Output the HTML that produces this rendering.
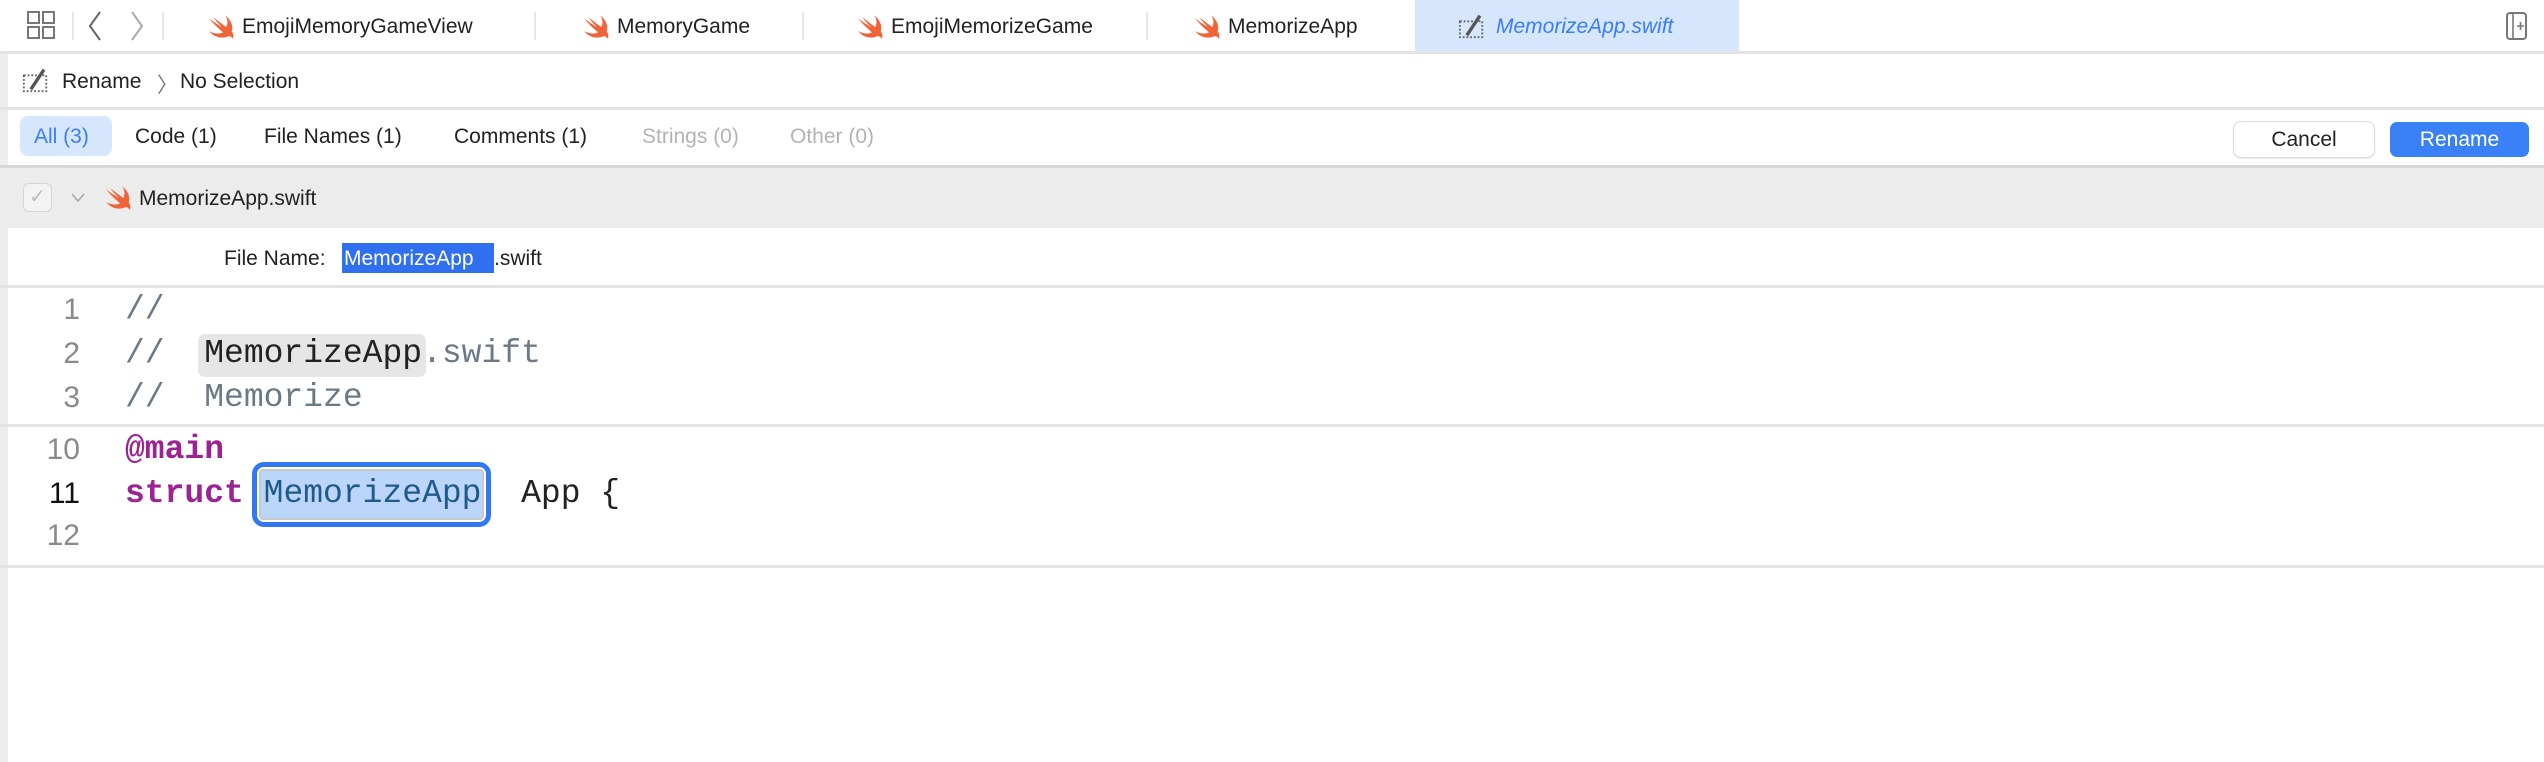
<!DOCTYPE html>
<html><head><meta charset="utf-8"><style>
*{margin:0;padding:0;box-sizing:border-box}
body{width:2544px;height:762px;background:#fff;font-family:"Liberation Sans",sans-serif;position:relative;overflow:hidden;color:#222}
.a{position:absolute;white-space:pre}
.hl{position:absolute;left:0;right:0;height:3px;background:#e3e3e3}
.t{font-size:21px;top:15px}
.mono{font-family:"Liberation Mono",monospace;font-size:33px}
.ln{position:absolute;width:80px;text-align:right;left:0;font-family:"Liberation Sans",sans-serif;font-size:30px;color:#8a8a8a}
.sep{position:absolute;top:12px;width:2px;height:28px;background:#e6e6e6}
</style></head><body>
<svg width="0" height="0" style="position:absolute"><defs>
<symbol id="sw" viewBox="0 0 28 24"><path d="M17 1c5 4 8 10 6 15 2 3 2 5 1 7-1-2-3-3-5-2-5 2-12 1-17-5 4 2 9 3 13 1C10 13 5 8 2 4c4 3 8 6 12 8C11 9 8 6 6 3c4 3 9 7 12 9 2-4 1-8-1-11z" fill="#f0643a"/></symbol>
<symbol id="rn" viewBox="0 0 30 30"><rect x="2" y="10" width="24" height="17" fill="none" stroke="#666" stroke-width="2" stroke-dasharray="2 2"/><path d="M8 24L22 3l3 2L11 26z" fill="#555"/></symbol>
</defs></svg>
<div class="a" style="left:0;top:52px;width:8px;height:710px;background:#eceeec"></div>
<svg class="a" style="left:26px;top:10px" width="30" height="30" viewBox="0 0 30 30"><g fill="none" stroke="#777" stroke-width="2"><rect x="2" y="2" width="11" height="11"/><rect x="17" y="2" width="11" height="11"/><rect x="2" y="17" width="11" height="11"/><rect x="17" y="17" width="11" height="11"/></g></svg>
<div class="sep" style="left:72px"></div>
<svg class="a" style="left:86px;top:10px" width="60" height="32" viewBox="0 0 60 32"><path d="M14 2L4 16l10 14" fill="none" stroke="#666" stroke-width="2"/><path d="M46 2l10 14-10 14" fill="none" stroke="#aaa" stroke-width="2"/></svg>
<div class="sep" style="left:162px"></div>
<svg class="a" style="left:207px;top:14px" width="30" height="26"><use href="#sw"/></svg><div class="a t" style="left:242px">EmojiMemoryGameView</div>
<div class="sep" style="left:534px"></div>
<svg class="a" style="left:582px;top:14px" width="30" height="26"><use href="#sw"/></svg><div class="a t" style="left:617px">MemoryGame</div>
<div class="sep" style="left:802px"></div>
<svg class="a" style="left:856px;top:14px" width="30" height="26"><use href="#sw"/></svg><div class="a t" style="left:891px">EmojiMemorizeGame</div>
<div class="sep" style="left:1146px"></div>
<svg class="a" style="left:1193px;top:14px" width="30" height="26"><use href="#sw"/></svg><div class="a t" style="left:1228px">MemorizeApp</div>
<div class="a" style="left:1415px;top:0;width:324px;height:52px;background:#d6e6fd"></div>
<svg class="a" style="left:1457px;top:12px" width="30" height="28"><use href="#rn"/></svg>
<div class="a t" style="left:1496px;color:#3a7ef5;font-style:italic">MemorizeApp.swift</div>
<svg class="a" style="left:2506px;top:12px" width="22" height="28" viewBox="0 0 22 28"><rect x="1" y="1" width="19" height="26" rx="3" fill="none" stroke="#777" stroke-width="2"/><path d="M7 2v24M11 14h7M14.5 10v8" stroke="#777" stroke-width="1.6"/></svg>
<div class="hl" style="top:51px"></div>
<svg class="a" style="left:21px;top:66px" width="30" height="28"><use href="#rn"/></svg>
<div class="a" style="left:62px;top:70px;font-size:21px">Rename</div>
<div class="a" style="left:157px;top:69px;font-size:21px;color:#777">〉</div>
<div class="a" style="left:180px;top:70px;font-size:21px">No Selection</div>
<div class="hl" style="top:107px"></div>
<div class="a" style="left:20px;top:116px;width:92px;height:40px;background:#d6e6fd;border-radius:8px"></div>
<div class="a" style="left:34px;top:125px;font-size:21px;color:#3a7ef5">All (3)</div>
<div class="a" style="left:135px;top:125px;font-size:21px">Code (1)</div>
<div class="a" style="left:264px;top:125px;font-size:21px">File Names (1)</div>
<div class="a" style="left:454px;top:125px;font-size:21px">Comments (1)</div>
<div class="a" style="left:642px;top:125px;font-size:21px;color:#b3b3b3">Strings (0)</div>
<div class="a" style="left:790px;top:125px;font-size:21px;color:#b3b3b3">Other (0)</div>
<div class="a" style="left:2234px;top:122px;width:140px;height:35px;border-radius:7px;background:#fff;box-shadow:0 0 0 1px #dcdcdc,0 1px 2px rgba(0,0,0,.2);font-size:21px;text-align:center;line-height:35px">Cancel</div>
<div class="a" style="left:2390px;top:122px;width:139px;height:35px;border-radius:7px;background:#3a80f6;color:#fff;font-size:21px;text-align:center;line-height:35px">Rename</div>
<div class="hl" style="top:165px;background:#d6d6d6"></div>
<div class="a" style="left:8px;top:168px;right:0;height:60px;background:#ececec"></div>
<div class="a" style="left:23px;top:183px;width:29px;height:29px;border:1px solid #d4d4d4;border-radius:6px;background:#f3f3f3;color:#bbb;font-size:20px;text-align:center;line-height:27px">✓</div>
<svg class="a" style="left:70px;top:192px" width="16" height="12"><path d="M2 2l6 7 6-7" fill="none" stroke="#aaa" stroke-width="1.6"/></svg>
<svg class="a" style="left:104px;top:185px" width="30" height="26"><use href="#sw"/></svg>
<div class="a" style="left:139px;top:187px;font-size:21px">MemorizeApp.swift</div>
<div class="a" style="left:224px;top:247px;font-size:21px">File Name:</div>
<div class="a" style="left:342px;top:243px;width:152px;height:30px;background:#2f6ff0"></div>
<div class="a" style="left:344px;top:247px;font-size:21px;color:#fff">MemorizeApp</div>
<div class="a" style="left:494px;top:247px;font-size:21px">.swift</div>
<div class="hl" style="top:285px"></div>
<div class="ln" style="top:293px">1</div>
<div class="ln" style="top:337px">2</div>
<div class="ln" style="top:381px">3</div>
<div class="a" style="left:198px;top:334px;width:228px;height:43px;background:#e6e6e6;border-radius:7px"></div>
<div class="a mono" style="left:125px;top:291px;color:#6c7986">//</div>
<div class="a mono" style="left:125px;top:335px;color:#6c7986">//  <span style="color:#222">MemorizeApp</span>.swift</div>
<div class="a mono" style="left:125px;top:379px;color:#6c7986">//  Memorize</div>
<div class="hl" style="top:424px"></div>
<div class="ln" style="top:433px">10</div>
<div class="ln" style="top:477px;color:#111">11</div>
<div class="ln" style="top:519px">12</div>
<div class="a mono" style="left:125px;top:431px;color:#9b2393;font-weight:bold">@main</div>
<div class="a" style="left:252px;top:462px;width:239px;height:65px;border:5px solid #3378f3;border-radius:12px;background:#fff"></div>
<div class="a" style="left:259px;top:469px;width:225px;height:51px;background:#bcd6fb;border:2px solid #c8c8c8;border-radius:4px"></div>
<div class="a mono" style="left:125px;top:475px"><span style="color:#9b2393;font-weight:bold">struct</span> <span style="color:#1f5a8a">MemorizeApp</span>  App {</div>
<div class="hl" style="top:565px"></div>
</body></html>
